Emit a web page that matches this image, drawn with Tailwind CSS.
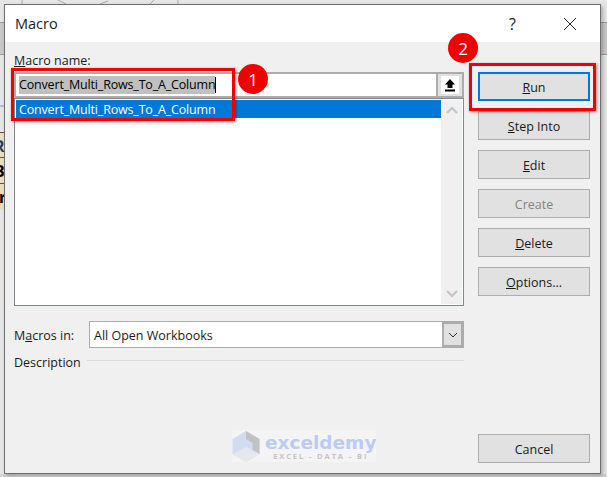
<!DOCTYPE html>
<html lang="en">
  <head>
    <meta charset="UTF-8" />
    <title>Macro</title>
    <script src="https://cdn.jsdelivr.net/npm/@tailwindcss/browser@4"></script>
  </head>
  <body class="bg-[#e6e6e6] font-['Open_Sans',sans-serif] text-[12.5px] text-[#1a1a1a] leading-none">
    <div class="relative w-[607px] h-[477px] overflow-hidden bg-[#e6e6e6]">
      <!-- sheet behind the dialog -->
      <svg class="absolute left-0 top-0" width="607" height="4" viewBox="0 0 607 4" fill="none" stroke="#a8a8a8">
        <path d="M22 0V4M58 0L66 4M100 4L108 1M150 4L154 0M178 0V4" />
      </svg>
      <div class="absolute left-0 top-[22px] w-[5px] h-[33px] bg-[#c8c8c8] border-y border-[#9a9a9a]"></div>
      <div class="absolute right-0 top-[22px] w-[6px] h-[33px] bg-[#c8c8c8] border-y border-[#9a9a9a]"></div>
      <div class="absolute left-0 top-[105px] w-[5px] h-[2px] bg-[#a9bfdc]"></div>
      <div class="absolute left-0 top-[132px] w-[5px] h-[78px] bg-[#e9dfc0] overflow-hidden font-bold text-[16px] text-black border-t border-[#555]">
        <div class="h-[25px] pt-[5px] pl-0 border-b border-[#555] -indent-[6px] text-[#1d3f6b]">R</div>
        <div class="h-[26px] pt-[5px] border-b border-[#555] -indent-[6px]">B</div>
        <div class="h-[26px] pt-[5px] -indent-[1px]">r</div>
      </div>
      <div class="absolute left-0 bottom-0 w-[607px] h-[3px] bg-[#d4d4d4]"></div>

      <!-- dialog window -->
      <div class="absolute left-[4px] top-[4px] w-[597px] h-[470px] border border-[#6e6e6e] bg-[#f0f0f0] shadow-[2px_2px_4px_rgba(0,0,0,0.25)] flex flex-col">
        <div class="h-[37px] bg-white flex items-center shrink-0">
          <span class="ml-[10px] mt-[2px] text-[14.5px]">Macro</span>
          <span class="ml-auto text-[16px] mr-[47px]">?</span>
          <svg class="mr-[23px]" width="14" height="14" viewBox="0 0 14 14" fill="none" stroke="#222" stroke-width="1">
            <path d="M1 1L13 13M13 1L1 13" />
          </svg>
        </div>

        <div class="flex-1 flex pl-[9px]">
          <!-- left column -->
          <div class="w-[450px] flex flex-col">
            <div class="mt-[13px] h-[16px]"><span class="underline">M</span>acro name:</div>
            <div class="h-[26px] mt-[1px] border-2 border-[#acacac] bg-white flex items-center">
              <span class="ml-[3px] bg-[#c0c0c0] leading-[18px] text-black tracking-[-0.17px]">Convert_Multi_Rows_To_A_Column</span>
              <span class="w-px h-[16px] bg-black"></span>
              <div class="ml-auto w-[26px] h-full flex items-center justify-center bg-[#e1e1e1] border-l-2 border-[#acacac]">
                <div class="w-[18px] h-[18px] bg-white flex items-center justify-center">
                  <svg width="12" height="14" viewBox="0 0 12 14" fill="#000">
                    <path d="M6 1L11 6.5H8.5V10H3.5V6.5H1Z" /><rect x="1" y="11.5" width="10" height="2" />
                  </svg>
                </div>
              </div>
            </div>
            <div class="h-[208px] border border-[#828790] bg-white flex p-px">
              <div class="flex-1">
                <div class="h-[18px] bg-[#0078d7] text-white pl-[3px] pt-[2px] flex items-center tracking-[-0.17px]">Convert_Multi_Rows_To_A_Column</div>
              </div>
              <div class="w-[21px] bg-[#f0f0f0] flex flex-col justify-between items-center py-[6px]">
                <svg width="12" height="8" viewBox="0 0 12 8" fill="none" stroke="#c4c4c4" stroke-width="2"><path d="M1 7L6 2L11 7" /></svg>
                <svg width="12" height="8" viewBox="0 0 12 8" fill="none" stroke="#c4c4c4" stroke-width="2"><path d="M1 1L6 6L11 1" /></svg>
              </div>
            </div>

            <div class="mt-[15px] h-[27px] flex items-center">
              <span class="w-[75px] mt-[3px]">M<span class="underline">a</span>cros in:</span>
              <div class="flex-1 h-full border border-[#acacac] bg-white flex items-center">
                <span class="ml-[4px] mt-[3px]">All Open Workbooks</span>
                <div class="ml-auto w-[21px] h-full bg-[#e1e1e1] border-2 border-[#acacac] flex items-center justify-center">
                  <svg width="10" height="6" viewBox="0 0 10 6" fill="none" stroke="#333" stroke-width="1"><path d="M1 1L5 5L9 1" /></svg>
                </div>
              </div>
            </div>
            <div class="mt-[9px] flex items-center">
              <span>Description</span>
              <div class="flex-1 h-px bg-[#dcdcdc] ml-[6px] mb-[5px]"></div>
            </div>
          </div>

          <!-- buttons -->
          <div class="w-[112px] ml-[14px] flex flex-col gap-[10px] pt-[30px] pb-[10px]">
            <button class="h-[29px] pt-[3px] bg-[#e1e1e1] border-2 border-[#0078d7]"><span class="underline">R</span>un</button>
            <button class="h-[29px] pt-[3px] bg-[#e1e1e1] border border-[#adadad]"><span class="underline">S</span>tep Into</button>
            <button class="h-[29px] pt-[3px] bg-[#e1e1e1] border border-[#adadad]"><span class="underline">E</span>dit</button>
            <button class="h-[29px] pt-[3px] bg-[#e1e1e1] border border-[#adadad] text-[#838383]">Create</button>
            <button class="h-[29px] pt-[3px] bg-[#e1e1e1] border border-[#adadad]"><span class="underline">D</span>elete</button>
            <button class="h-[29px] pt-[3px] bg-[#e1e1e1] border border-[#adadad]"><span class="underline">O</span>ptions...</button>
            <button class="h-[29px] pt-[3px] mt-auto bg-[#e1e1e1] border border-[#adadad]">Cancel</button>
          </div>
        </div>
      </div>

      <!-- annotations over the dialog -->
      <div class="absolute left-[11px] top-[68px] w-[224px] h-[53px] border-[3px] border-[#f00000] shadow-[1px_1px_3px_rgba(0,0,0,0.4)]"></div>
      <div class="absolute left-[469px] top-[63px] w-[127px] h-[48px] border-[3px] border-[#f00000] shadow-[1px_1px_3px_rgba(0,0,0,0.4)]"></div>
      <div class="absolute left-[238px] top-[64px] w-[30px] h-[30px] rounded-full bg-[#f00000] text-white text-[17px] flex items-center justify-center">1</div>
      <div class="absolute left-[448px] top-[33px] w-[30px] h-[30px] rounded-full bg-[#f00000] text-white text-[17px] flex items-center justify-center">2</div>

      <!-- watermark -->
      <div class="absolute left-[232px] top-[430px] h-[32px] flex items-center gap-[5px] bg-[#f4f4f4]">
        <svg width="28" height="31" viewBox="0 0 27 31" opacity="0.55">
          <path d="M13.5 0L0 8V23L13.5 31L27 23V8Z" fill="#b7c9ee" />
          <path d="M13.5 0L27 8V23L20 19V12L13.5 8Z" fill="#9a9a9a" />
          <path d="M0 23L13.5 16L27 23L13.5 31Z" fill="#d5dfe8" />
        </svg>
        <div class="flex flex-col items-center pt-[3px]">
          <span class="text-[18.5px] font-bold text-[#bccbf0] font-['DejaVu_Sans',sans-serif] leading-[16px] h-[17px]">exceldemy</span>
          <span class="text-[7.5px] font-bold text-[#c4c4c4] tracking-[1.9px] leading-[8px]">EXCEL - DATA - BI</span>
        </div>
      </div>
    </div>
  </body>
</html>
